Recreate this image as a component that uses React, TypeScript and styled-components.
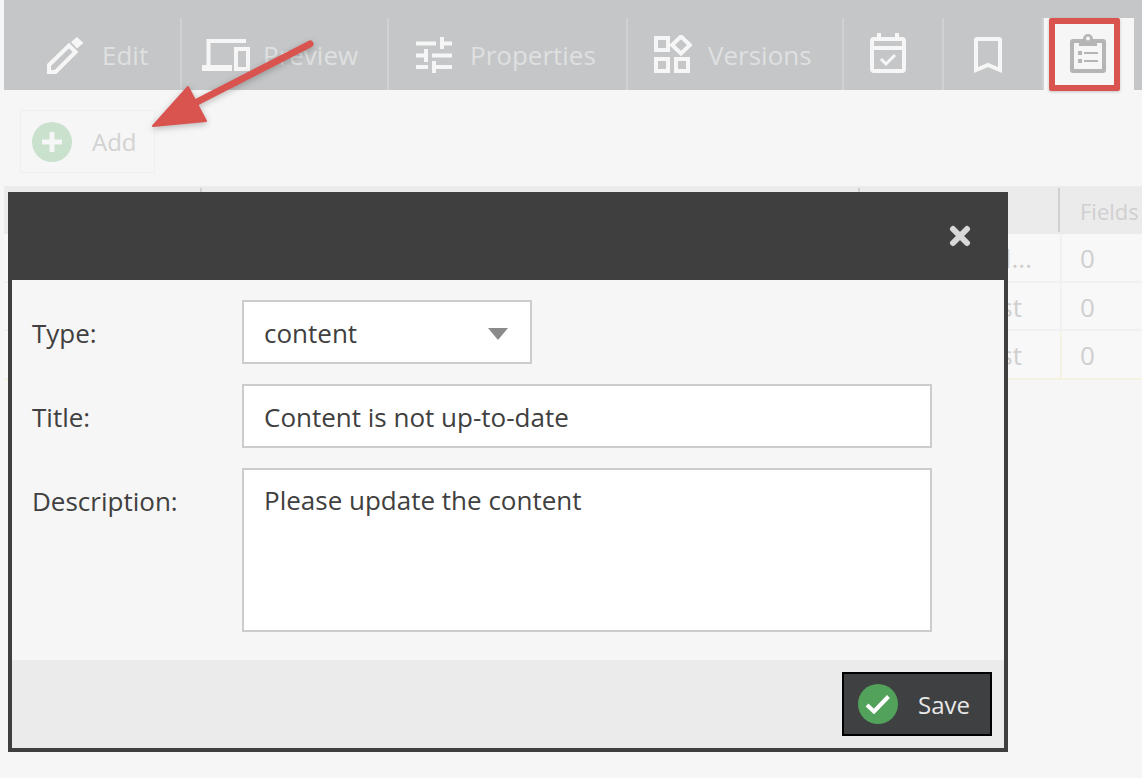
import React from 'react';
import styled, { createGlobalStyle } from 'styled-components';

const GlobalStyle = createGlobalStyle`
  html, body {
    margin: 0;
    padding: 0;
    background: #f6f6f6;
  }

  body {
    font-family: 'Open Sans', 'Noto Sans', sans-serif;
    overflow: hidden;
  }
`;

const tabs = [
  { key: 'edit', label: 'Edit', width: 178, pad: 43, gap: 18, icon: <PencilIcon /> },
  { key: 'preview', label: 'Preview', width: 207, pad: 20, gap: 13, icon: <DevicesIcon /> },
  { key: 'properties', label: 'Properties', width: 239, pad: 27, gap: 18, icon: <SlidersIcon /> },
  { key: 'versions', label: 'Versions', width: 216, pad: 26, gap: 16, icon: <WidgetsIcon /> },
  { key: 'schedule', width: 100, pad: 26, gap: 0, icon: <CalendarIcon /> },
  { key: 'bookmark', width: 100, pad: 30, gap: 0, icon: <BookmarkIcon /> },
];

const rows = [
  { key: 'a', tail: 'd...', inset: 28, fields: '0' },
  { key: 'b', tail: 'st', inset: 38, fields: '0' },
  { key: 'c', tail: 'st', inset: 38, fields: '0', warn: true },
];

export default function App(): JSX.Element {
  return (
    <Page>
      <GlobalStyle />
      <Toolbar>
        {tabs.map((tab) => (
          <Tab key={tab.key} $width={tab.width} $pad={tab.pad} $gap={tab.gap}>
            {tab.icon}
            {tab.label && <TabLabel>{tab.label}</TabLabel>}
          </Tab>
        ))}
        <ActiveTab>
          <ClipboardIcon />
        </ActiveTab>
      </Toolbar>

      <ActionBar>
        <AddButton>
          <AddCircle>
            <svg width="20" height="20" viewBox="0 0 20 20">
              <path d="M7.500 0h5v7.500H20v5h-7.500V20h-5v-7.500H0v-5h7.500z" fill="#f6f6f6" />
            </svg>
          </AddCircle>
          <AddLabel>Add</AddLabel>
        </AddButton>
      </ActionBar>

      <Table>
        <HeaderRow>
          <HeaderCell $width={198} />
          <HeaderCell $width={658} />
          <HeaderCell $width={200} />
          <HeaderCell $last>Fields</HeaderCell>
        </HeaderRow>
        {rows.map((row) => (
          <BodyRow key={row.key} $warn={row.warn}>
            <TailCell $inset={row.inset}>{row.tail}</TailCell>
            <FieldsCell $warn={row.warn}>{row.fields}</FieldsCell>
          </BodyRow>
        ))}
      </Table>

      <Modal>
        <ModalHeader>
          <svg width="22" height="22" viewBox="0 0 22 22">
            <path d="m4 4 14 14M18 4 4 18" fill="none" stroke="#d8d8d8" strokeWidth="6" strokeLinecap="round" />
          </svg>
        </ModalHeader>
        <ModalBody>
          <Label>Type:</Label>
          <SelectBox>
            content
            <Caret />
          </SelectBox>
          <Label>Title:</Label>
          <TextInput readOnly value="Content is not up-to-date" />
          <Label>Description:</Label>
          <TextArea readOnly value="Please update the content" />
        </ModalBody>
        <ModalFooter>
          <SaveButton>
            <SaveCircle>
              <svg width="26" height="20" viewBox="0 0 26 20">
                <path d="m2 11 7 6.500L23.500 2.500" fill="none" stroke="#fff" strokeWidth="4" />
              </svg>
            </SaveCircle>
            Save
          </SaveButton>
        </ModalFooter>
      </Modal>

      <Arrow viewBox="0 0 200 140" width="200" height="140">
        <path d="M189 44 72 104" stroke="#d9534f" strokeWidth="7" strokeLinecap="round" fill="none" />
        <path d="M32 126 67 87 85 121z" fill="#d9534f" stroke="#d9534f" strokeWidth="2" strokeLinejoin="round" />
      </Arrow>
      <Highlight />
    </Page>
  );
}

function PencilIcon() {
  return (
    <TabIcon width="37" height="37" viewBox="0 0 37 37">
      <path d="M2 28 22 8.500l6.500 6.500L8.500 35H2z" fill="none" stroke="#f6f6f6" strokeWidth="4" />
      <path d="m24 5 6-5 6.500 6-6.500 5.500z" fill="#f6f6f6" />
    </TabIcon>
  );
}

function DevicesIcon() {
  return (
    <TabIcon width="48" height="32" viewBox="0 0 48 32">
      <path d="M6.500 28V2H44" fill="none" stroke="#f6f6f6" strokeWidth="4" />
      <path d="M0 26h30v6H0z" fill="#f6f6f6" />
      <rect x="34" y="10" width="12" height="20" fill="none" stroke="#f6f6f6" strokeWidth="4" />
    </TabIcon>
  );
}

function SlidersIcon() {
  return (
    <TabIcon width="36" height="36" viewBox="0 0 36 36">
      <path
        d="M0 6.500h20M26 0v12M28 6.500h8M0 18.500h8M10 12v13M16 18.500h20M0 30h12M18 24v12M20 30h16"
        stroke="#f6f6f6"
        strokeWidth="4"
        fill="none"
      />
    </TabIcon>
  );
}

function WidgetsIcon() {
  return (
    <TabIcon width="38" height="40" viewBox="0 0 38 40">
      <g fill="none" stroke="#f6f6f6" strokeWidth="4">
        <path d="M2 3h12v12H2zM2 24h12v12H2zM22 24h12v12H22z" />
        <path d="m27 1.500 9 8.500-9 8.500-9-8.500z" />
      </g>
    </TabIcon>
  );
}

function CalendarIcon() {
  return (
    <TabIcon width="36" height="44" viewBox="0 0 36 44">
      <g fill="none" stroke="#f6f6f6" strokeWidth="4">
        <rect x="2" y="6" width="32" height="32" rx="2" />
        <path d="M2 15h32M9 0v6M27 0v6" />
        <path d="m11 26 5 5 9-9" strokeWidth="3" />
      </g>
    </TabIcon>
  );
}

function BookmarkIcon() {
  return (
    <TabIcon width="28" height="36" viewBox="0 0 28 36">
      <path d="M2 33V3a1 1 0 0 1 1-1h22a1 1 0 0 1 1 1v30l-12-5z" fill="none" stroke="#f6f6f6" strokeWidth="4" />
    </TabIcon>
  );
}

function ClipboardIcon() {
  return (
    <TabIcon width="36" height="44" viewBox="0 0 36 44">
      <path
        fillRule="evenodd"
        d="M3 6h10a5 5 0 0 1 10 0h10a3 3 0 0 1 3 3v28a3 3 0 0 1-3 3H3a3 3 0 0 1-3-3V9a3 3 0 0 1 3-3zm1 4v26h28V10h-5v3H9v-3zM18 3.500a2 2 0 1 0 0 4 2 2 0 0 0 0-4z"
        fill="#b5b5b5"
      />
      <path d="M8 18h4v4H8zM8 26h4v4H8zM14 19h14v2H14zM14 27h14v2H14z" fill="#b5b5b5" />
    </TabIcon>
  );
}

const Page = styled.div`
  position: relative;
  width: 1142px;
  height: 778px;
  overflow: hidden;
  background: #f6f6f6;
`;

const Toolbar = styled.div`
  display: flex;
  align-items: flex-end;
  height: 90px;
  margin-left: 4px;
  background: #c5c6c7;
`;

const Tab = styled.div<{ $width: number; $pad: number; $gap: number }>`
  display: flex;
  align-items: center;
  gap: ${(props) => props.$gap}px;
  box-sizing: border-box;
  flex: none;
  width: ${(props) => props.$width}px;
  height: 72px;
  padding: 2px 0 0 ${(props) => props.$pad}px;
  border-right: 2px solid #d0d1d2;
`;

const TabIcon = styled.svg`
  flex: none;
  display: block;
`;

const TabLabel = styled.span`
  font-size: 26px;
  line-height: 32px;
  color: #dfe0e1;
`;

const ActiveTab = styled.div`
  display: flex;
  align-items: center;
  flex: none;
  box-sizing: border-box;
  width: 90px;
  height: 72px;
  padding: 2px 0 0 26px;
  background: #f6f6f6;
`;

const ActionBar = styled.div`
  display: flex;
  align-items: flex-start;
  box-sizing: border-box;
  height: 96px;
  padding: 20px 0 0 20px;
`;

const AddButton = styled.div`
  display: flex;
  align-items: center;
  gap: 20px;
  box-sizing: border-box;
  width: 135px;
  height: 63px;
  padding-left: 11px;
  border: 1px solid #efefef;
`;

const AddCircle = styled.div`
  display: flex;
  align-items: center;
  justify-content: center;
  width: 40px;
  height: 40px;
  border-radius: 50%;
  background: #c9e1cd;
`;

const AddLabel = styled.span`
  font-size: 24px;
  color: #d2d2d2;
`;

const Table = styled.div`
  display: flex;
  flex-direction: column;
  margin-left: 4px;
`;

const HeaderRow = styled.div`
  display: flex;
  height: 48px;
  background: #ebebeb;
`;

const HeaderCell = styled.div<{ $width?: number; $last?: boolean }>`
  box-sizing: border-box;
  flex: ${(props) => (props.$last ? '1' : 'none')};
  width: ${(props) => (props.$width ? `${props.$width}px` : 'auto')};
  height: 44px;
  margin-top: 2px;
  padding-left: 20px;
  border-right: ${(props) => (props.$last ? 'none' : '2px solid #d0d0d0')};
  font-size: 22px;
  line-height: 46px;
  color: #cfcfcf;
`;

const BodyRow = styled.div<{ $warn?: boolean }>`
  display: flex;
  box-sizing: border-box;
  height: 48.67px;
  border-bottom: 2px solid ${(props) => (props.$warn ? '#f5f2e4' : '#f1f1f1')};
  background: #f8f8f8;
`;

const TailCell = styled.div<{ $inset: number }>`
  flex: none;
  box-sizing: border-box;
  width: 1056px;
  padding-right: ${(props) => props.$inset}px;
  text-align: right;
  font-size: 26px;
  line-height: 48px;
  color: #cfcfcf;
`;

const FieldsCell = styled.div<{ $warn?: boolean }>`
  flex: 1;
  padding-left: 18px;
  border-left: 2px solid ${(props) => (props.$warn ? '#f5f2e4' : '#f1f1f1')};
  font-size: 26px;
  line-height: 48px;
  color: #cfcfcf;
`;

const Modal = styled.div`
  position: absolute;
  top: 192px;
  left: 8px;
  display: flex;
  flex-direction: column;
  box-sizing: border-box;
  width: 1000px;
  height: 560px;
  border: 4px solid #3f3f3f;
  background: #f6f6f6;
`;

const ModalHeader = styled.div`
  display: flex;
  align-items: center;
  justify-content: flex-end;
  flex: none;
  box-sizing: border-box;
  height: 84px;
  padding: 0 33px 4px 0;
  background: #3f3f3f;
`;

const ModalBody = styled.div`
  flex: 1;
  display: grid;
  grid-template-columns: 210px 690px;
  grid-template-rows: 64px 64px 164px;
  row-gap: 20px;
  align-content: start;
  padding: 20px 0 0 20px;
`;

const Label = styled.div`
  padding-top: 13px;
  font-size: 26px;
  line-height: 40px;
  color: #404040;
`;

const fieldText = `
  box-sizing: border-box;
  border: 2px solid #cccccc;
  background: #fff;
  font-family: 'Open Sans', 'Noto Sans', sans-serif;
  font-size: 26px;
  color: #404040;
  outline: none;
`;

const SelectBox = styled.div`
  ${fieldText}
  display: flex;
  align-items: center;
  justify-content: space-between;
  width: 290px;
  padding: 1px 22px 0 20px;
`;

const Caret = styled.span`
  width: 0;
  height: 0;
  margin-top: 3px;
  border-left: 10px solid transparent;
  border-right: 10px solid transparent;
  border-top: 12px solid #8a8a8a;
`;

const TextInput = styled.input`
  ${fieldText}
  width: 690px;
  padding: 1px 20px 0;
`;

const TextArea = styled.textarea`
  ${fieldText}
  display: block;
  width: 690px;
  height: 164px;
  padding: 10px 20px;
  line-height: 40px;
  resize: none;
`;

const ModalFooter = styled.div`
  display: flex;
  align-items: center;
  justify-content: flex-end;
  flex: none;
  height: 88px;
  padding-right: 12px;
  background: #ebebeb;
`;

const SaveButton = styled.div`
  display: flex;
  align-items: center;
  gap: 20px;
  box-sizing: border-box;
  width: 150px;
  height: 64px;
  padding-left: 14px;
  border: 2px solid #000;
  background: #3f4042;
  font-size: 24px;
  color: #e8e8e8;
`;

const SaveCircle = styled.div`
  display: flex;
  align-items: center;
  justify-content: center;
  width: 40px;
  height: 40px;
  border-radius: 50%;
  background: #52a25b;
`;

const Arrow = styled.svg`
  position: absolute;
  top: 0;
  left: 121px;
  filter: drop-shadow(0 2px 3px rgba(0, 0, 0, 0.25));
`;

const Highlight = styled.div`
  position: absolute;
  top: 18px;
  left: 1049px;
  box-sizing: border-box;
  width: 71px;
  height: 73px;
  border: 6px solid #d9534f;
  border-radius: 2px;
  box-shadow: 0 1px 3px rgba(0, 0, 0, 0.2);
`;
